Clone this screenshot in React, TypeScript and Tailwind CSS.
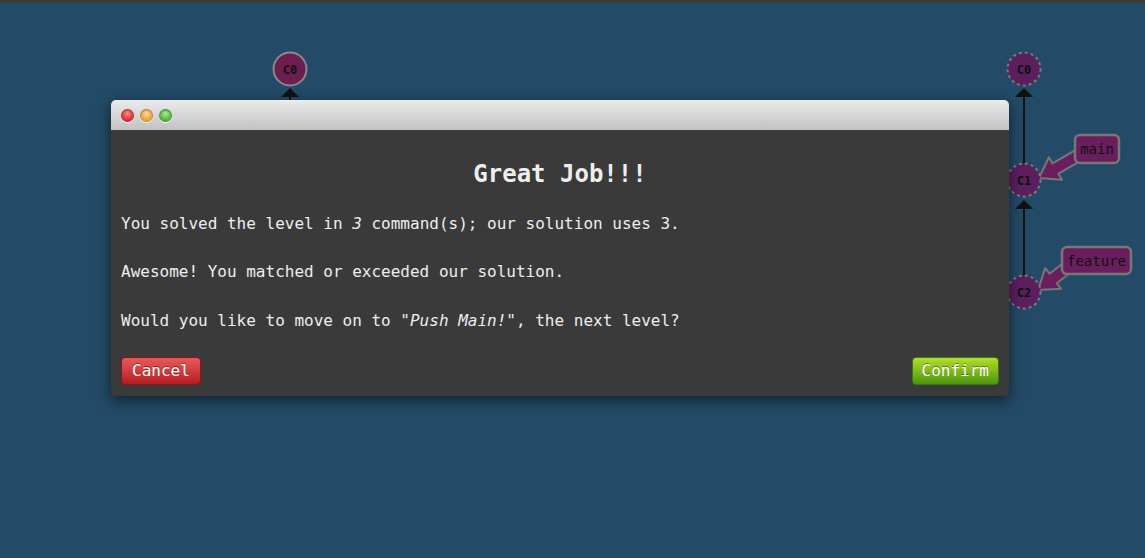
import React from "react";

const mono = "font-['DejaVu_Sans_Mono','Liberation_Mono',monospace]";

type Pt = [number, number];

// fat label arrow from label box (start) to commit (tip)
function fatArrow(start: Pt, tip: Pt) {
  const dx = tip[0] - start[0];
  const dy = tip[1] - start[1];
  const len = Math.hypot(dx, dy);
  const u: Pt = [dx / len, dy / len];
  const n: Pt = [-u[1], u[0]];
  const headLen = 19;
  const b: Pt = [tip[0] - u[0] * headLen, tip[1] - u[1] * headLen];
  const p = (o: Pt, k: number): string => `${o[0] + n[0] * k},${o[1] + n[1] * k}`;
  return [p(start, 6), p(b, 6), p(b, 13), `${tip[0]},${tip[1]}`, p(b, -13), p(b, -6), p(start, -6)].join(" ");
}

function Commit({ x, y, id, dashed, fill }: { x: number; y: number; id: string; dashed?: boolean; fill: string }) {
  return (
    <g>
      <circle cx={x} cy={y} r={16.5} fill={fill} stroke={dashed ? "#7a7a7a" : "#8a8a8a"} strokeWidth={2} strokeDasharray={dashed ? "3 3" : undefined} />
      <text x={x} y={y + 4.5} textAnchor="middle" fontSize={12} fontWeight="bold" fill="#111" fontFamily="DejaVu Sans Mono, monospace">
        {id}
      </text>
    </g>
  );
}

function Branch({ box, text, start, tip }: { box: [number, number, number, number]; text: string; start: Pt; tip: Pt }) {
  const [x, y, w, h] = box;
  return (
    <g>
      <polygon points={fatArrow(start, tip)} fill="#6a1e5e" stroke="#777" strokeWidth={2} strokeLinejoin="round" />
      <rect x={x} y={y} width={w} height={h} rx={5} fill="#6a1e5e" stroke="#777" strokeWidth={2.5} />
      <text x={x + w / 2} y={y + h / 2 + 5} textAnchor="middle" fontSize={14} fill="#111" fontFamily="DejaVu Sans Mono, monospace">
        {text}
      </text>
    </g>
  );
}

function Light({ color }: { color: string }) {
  return (
    <span className="w-[13px] h-[13px] rounded-full shadow-[0_1px_0_rgba(255,255,255,0.9),inset_0_1px_2px_rgba(0,0,0,0.35)]" style={{ background: color }} />
  );
}

export default function App() {
  return (
    <div className="relative w-[1145px] h-[558px] bg-[#234a66] overflow-hidden">
      <div className="h-[3px] bg-[#3b3b3b]" />

      <svg className="absolute left-0 top-0" width={1145} height={558}>
        {/* left tree */}
        <Commit x={290} y={69} id="C0" fill="#6c1e50" />
        <polygon points="281,97 299,97 290,88" fill="#111" />
        <line x1={290} y1={97} x2={290} y2={110} stroke="#111" strokeWidth={2} />

        {/* right tree */}
        <line x1={1024} y1={95} x2={1024} y2={165} stroke="#111" strokeWidth={2} />
        <polygon points="1015,97 1033,97 1024,88" fill="#111" />
        <line x1={1024} y1={207} x2={1024} y2={277} stroke="#111" strokeWidth={2} />
        <polygon points="1015,209 1033,209 1024,200" fill="#111" />

        <Branch box={[1075, 135, 44, 28]} text="main" start={[1084, 152]} tip={[1039, 178]} />
        <Branch box={[1062, 247, 69, 27]} text="feature" start={[1072, 264]} tip={[1038, 290]} />

        <Commit x={1024} y={69} id="C0" fill="#5c1f5e" dashed />
        <Commit x={1024} y={180} id="C1" fill="#5c1f5e" dashed />
        <Commit x={1024} y={292} id="C2" fill="#5c1f5e" dashed />
      </svg>

      {/* modal */}
      <div className="absolute left-[111px] top-[100px] w-[898px] rounded-t-[5px] bg-[#3a3a3a] shadow-[0_4px_14px_rgba(0,0,0,0.55)]">
        <div className="h-[30px] rounded-t-[5px] bg-gradient-to-b from-[#ececec] to-[#c2c2c2] flex items-center gap-[6px] pl-[10px]">
          <Light color="radial-gradient(circle at 50% 35%, #ff8a8a, #e0303a 60%, #b01a22)" />
          <Light color="radial-gradient(circle at 50% 35%, #ffd79a, #eaa23a 60%, #c47a18)" />
          <Light color="radial-gradient(circle at 50% 35%, #a8ec9a, #52b43e 60%, #2f8a22)" />
        </div>

        <div className={`px-[10px] pt-[26px] pb-[11px] text-[#eeeeee] ${mono}`}>
          <h2 className="text-[24px] leading-[36px] font-bold text-center">Great Job!!!</h2>
          <p className="mt-[20px] text-[16px] leading-[24px]">
            You solved the level in <em>3</em> command(s); our solution uses 3.
          </p>
          <p className="mt-[24px] text-[16px] leading-[24px]">Awesome! You matched or exceeded our solution.</p>
          <p className="mt-[25px] text-[16px] leading-[24px]">
            Would you like to move on to "<em>Push Main!</em>", the next level?
          </p>

          <div className="mt-[24px] flex justify-between">
            <button className={`h-[28px] px-[10px] rounded-[4px] border border-[#8a1414] bg-gradient-to-b from-[#e8585c] to-[#b71a1e] text-white text-[16px] [text-shadow:0_-1px_0_rgba(0,0,0,0.4)] ${mono}`}>
              Cancel
            </button>
            <button className={`h-[28px] px-[9px] rounded-[4px] border border-[#3d7a0c] bg-gradient-to-b from-[#b4dc2c] to-[#4b960e] text-white text-[16px] [text-shadow:0_-1px_0_rgba(0,0,0,0.4)] ${mono}`}>
              Confirm
            </button>
          </div>
        </div>
      </div>
    </div>
  );
}
